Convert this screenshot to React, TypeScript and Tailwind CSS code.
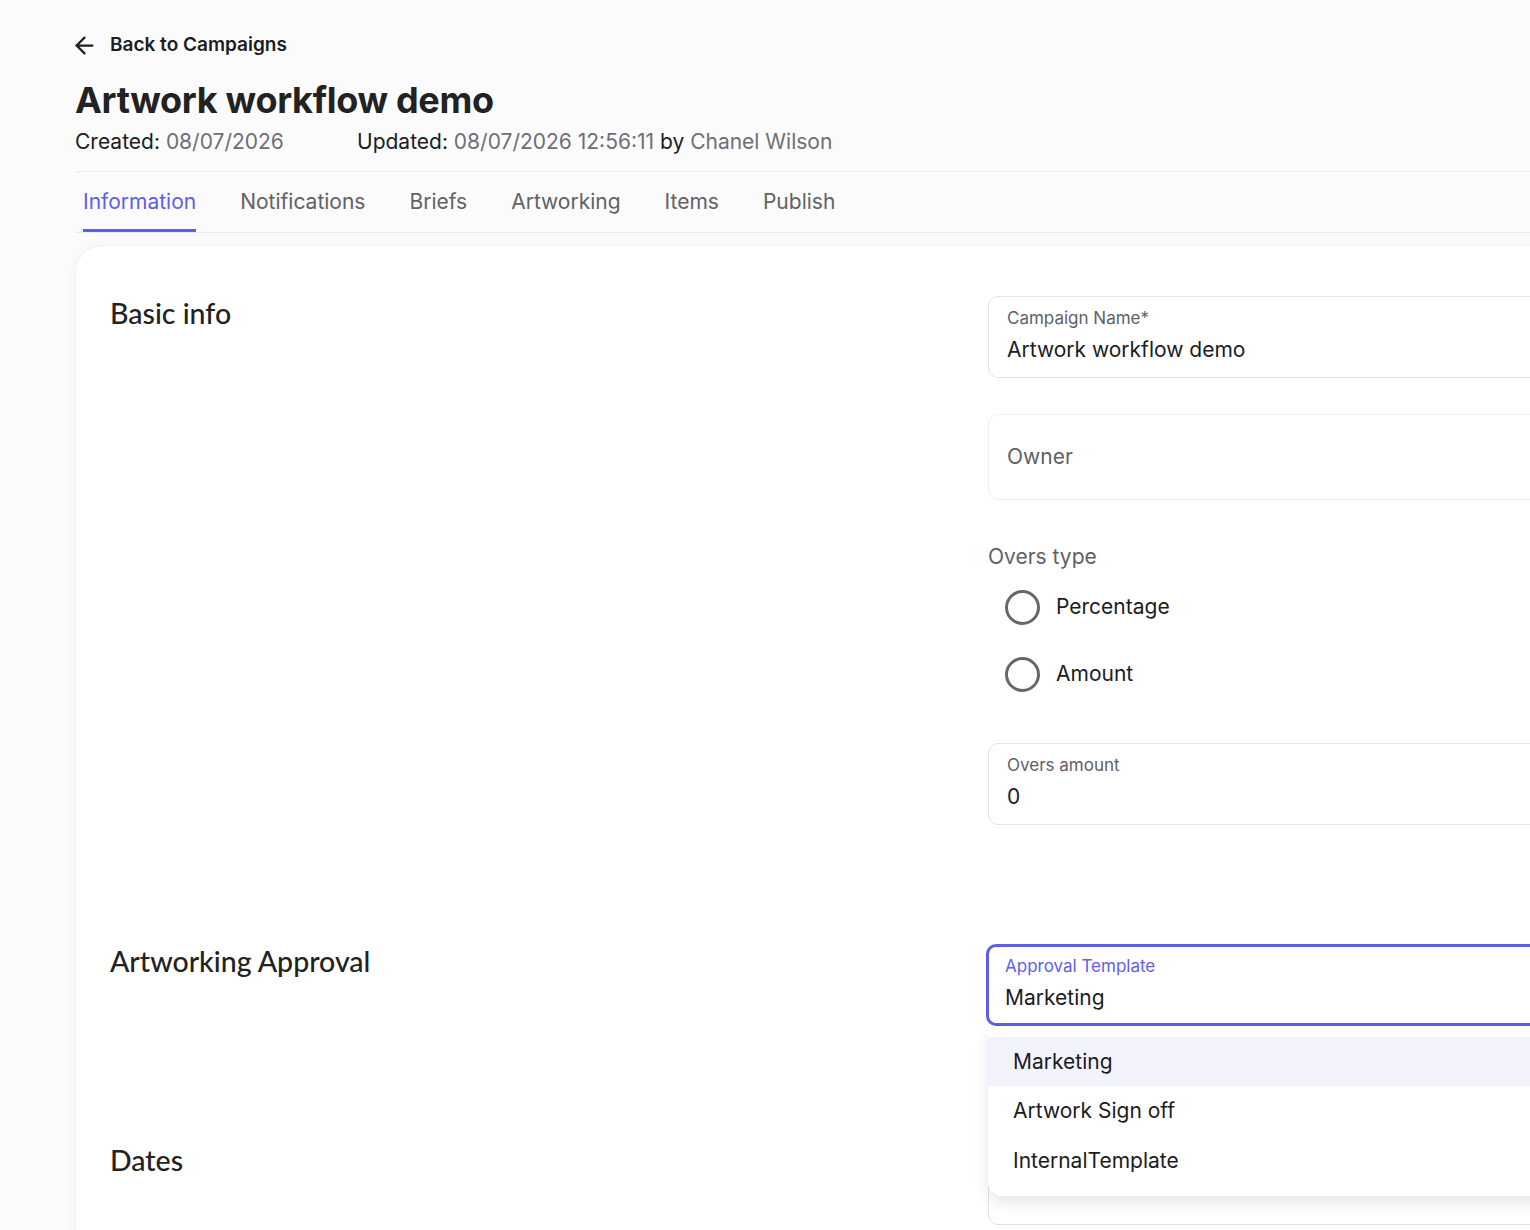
import { ArrowLeft } from "lucide-react"

const tabs = ["Information", "Notifications", "Briefs", "Artworking", "Items", "Publish"]

function TextField({ label, value, focused }: { label: string, value: string, focused?: boolean }) {
  return (
    <div className={focused
      ? "h-[82px] rounded-[10px] border-[3px] border-[#5d5fe8] px-[16px] pt-[8px] bg-white"
      : "h-[82px] rounded-[10px] border border-[#e3e3e6] px-[18px] pt-[10px] bg-white"}>
      <div className={focused ? "text-[17px] leading-[22px] text-[#5d5fe8]" : "text-[17px] leading-[22px] text-[#5f5f64]"}>{label}</div>
      <div className="text-[21px] leading-[30px] mt-[6px] text-[#1c1c1f]">{value}</div>
    </div>
  )
}

function Radio({ label }: { label: string }) {
  return (
    <div className="flex items-center gap-[16px] pl-[17px] h-[34px]">
      <span className="w-[35px] h-[35px] rounded-full border-[3px] border-[#67676b] bg-white" />
      <span className="text-[21px] text-[#1c1c1f]">{label}</span>
    </div>
  )
}

function SectionTitle({ text }: { text: string }) {
  return (
    <h2 className="text-[28.5px] leading-[34px] font-medium text-[#222]" style={{ fontFamily: "Lato, Inter, sans-serif" }}>{text}</h2>
  )
}

export default function App() {
  return (
    <div className="w-[1530px] h-[1230px] overflow-hidden bg-[#fbfbfb] text-[#1c1c1f]" style={{ fontFamily: "Inter, 'Noto Sans', sans-serif" }}>
      <div className="w-[1800px] pl-[75px] pt-[32px]">
        <a className="flex items-center gap-[12px] h-[26px] -ml-[4px]">
          <ArrowLeft className="w-[27px] h-[27px]" strokeWidth={2} />
          <span className="text-[19px] font-semibold text-[#1c1c1f]">Back to Campaigns</span>
        </a>
        <h1 className="mt-[18px] text-[36px] leading-[48px] font-bold tracking-[-0.3px] text-[#222]">Artwork workflow demo</h1>
        <div className="flex text-[21px] leading-[28px] mt-[4px]">
          <div className="w-[282px]">
            Created: <span className="text-[#6d6f78]">08/07/2026</span>
          </div>
          <div>
            Updated: <span className="text-[#6d6f78]">08/07/2026 12:56:11</span> by <span className="text-[#6d6f78]">Chanel Wilson</span>
          </div>
        </div>

        <div className="mt-[15px] border-t border-b border-[#ececef] h-[62px] flex items-end pl-[8px] gap-[44px]">
          {tabs.map((t, i) => (
            <div key={t} className={i === 0
              ? "h-full flex items-center border-b-[3px] border-[#5d5fe8] text-[#5d5fe8] text-[21px] pt-[3px]"
              : "h-full flex items-center border-b-[3px] border-transparent text-[#616166] text-[21px] pt-[3px]"}>
              {t}
            </div>
          ))}
        </div>

        <div className="mt-[12px] bg-white rounded-[28px] shadow-[0_0_12px_rgba(0,0,0,0.04)] border border-[#f2f2f2] pl-[34px] pt-[50px] pb-[40px]">
          <div className="grid grid-cols-[878px_1fr]">
            <SectionTitle text="Basic info" />
            <div className="flex flex-col">
              <TextField label="Campaign Name*" value="Artwork workflow demo" />
              <div className="mt-[36px] h-[86px] rounded-[10px] border border-[#efeff1] px-[18px] flex items-center text-[21px] text-[#5f5f64]">Owner</div>
              <div className="mt-[43px] text-[21px] leading-[28px] text-[#5f5f64]">Overs type</div>
              <div className="mt-[19px] flex flex-col gap-[33px]">
                <Radio label="Percentage" />
                <Radio label="Amount" />
              </div>
              <div className="mt-[52px]">
                <TextField label="Overs amount" value="0" />
              </div>
            </div>
          </div>

          <div className="grid grid-cols-[878px_1fr] mt-[119px]">
            <SectionTitle text="Artworking Approval" />
            <div className="relative -ml-[2px]">
              <TextField label="Approval Template" value="Marketing" focused />
              <div className="absolute left-[2px] right-0 top-[83px] z-10 bg-white rounded-b-[14px] rounded-t-[6px] shadow-[0_6px_16px_rgba(0,0,0,0.10)] py-[10px]">
                <div className="h-[49px] flex items-center px-[25px] text-[21px] bg-[#f2f3fc]">Marketing</div>
                <div className="h-[50px] flex items-center px-[25px] text-[21px]">Artwork Sign off</div>
                <div className="h-[50px] flex items-center px-[25px] text-[21px]">InternalTemplate</div>
              </div>
            </div>
          </div>

          <div className="grid grid-cols-[878px_1fr] mt-[117px]">
            <SectionTitle text="Dates" />
            <div className="h-[82px] rounded-[10px] border border-[#e3e3e6] bg-white" />
          </div>
        </div>
      </div>
    </div>
  )
}
